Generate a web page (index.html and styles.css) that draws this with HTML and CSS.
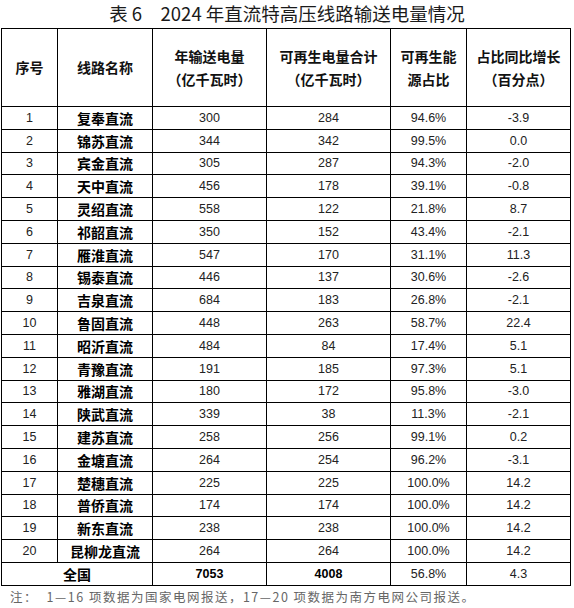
FILE: index.html
```html
<!DOCTYPE html>
<html>
<head>
<meta charset="utf-8">
<link rel="stylesheet" href="styles.css">
</head>
<body>
    <div class="title">表 6　2024 年直流特高压线路输送电量情况</div>
    <table class="grid">
        <colgroup>
            <col class="c-no"><col class="c-name"><col class="c-year"><col class="c-green"><col class="c-share"><col class="c-delta">
        </colgroup>
        <thead>
            <tr>
                <th>序号</th>
                <th>线路名称</th>
                <th>年输送电量<br>（亿千瓦时）</th>
                <th>可再生电量合计<br>（亿千瓦时）</th>
                <th>可再生能<br>源占比</th>
                <th>占比同比增长<br>（百分点）</th>
            </tr>
        </thead>
        <tbody>
            <tr><td>1</td><td class="name">复奉直流</td><td>300</td><td>284</td><td>94.6%</td><td>-3.9</td></tr>
            <tr><td>2</td><td class="name">锦苏直流</td><td>344</td><td>342</td><td>99.5%</td><td>0.0</td></tr>
            <tr><td>3</td><td class="name">宾金直流</td><td>305</td><td>287</td><td>94.3%</td><td>-2.0</td></tr>
            <tr><td>4</td><td class="name">天中直流</td><td>456</td><td>178</td><td>39.1%</td><td>-0.8</td></tr>
            <tr><td>5</td><td class="name">灵绍直流</td><td>558</td><td>122</td><td>21.8%</td><td>8.7</td></tr>
            <tr><td>6</td><td class="name">祁韶直流</td><td>350</td><td>152</td><td>43.4%</td><td>-2.1</td></tr>
            <tr><td>7</td><td class="name">雁淮直流</td><td>547</td><td>170</td><td>31.1%</td><td>11.3</td></tr>
            <tr><td>8</td><td class="name">锡泰直流</td><td>446</td><td>137</td><td>30.6%</td><td>-2.6</td></tr>
            <tr><td>9</td><td class="name">吉泉直流</td><td>684</td><td>183</td><td>26.8%</td><td>-2.1</td></tr>
            <tr><td>10</td><td class="name">鲁固直流</td><td>448</td><td>263</td><td>58.7%</td><td>22.4</td></tr>
            <tr><td>11</td><td class="name">昭沂直流</td><td>484</td><td>84</td><td>17.4%</td><td>5.1</td></tr>
            <tr><td>12</td><td class="name">青豫直流</td><td>191</td><td>185</td><td>97.3%</td><td>5.1</td></tr>
            <tr><td>13</td><td class="name">雅湖直流</td><td>180</td><td>172</td><td>95.8%</td><td>-3.0</td></tr>
            <tr><td>14</td><td class="name">陕武直流</td><td>339</td><td>38</td><td>11.3%</td><td>-2.1</td></tr>
            <tr><td>15</td><td class="name">建苏直流</td><td>258</td><td>256</td><td>99.1%</td><td>0.2</td></tr>
            <tr><td>16</td><td class="name">金塘直流</td><td>264</td><td>254</td><td>96.2%</td><td>-3.1</td></tr>
            <tr><td>17</td><td class="name">楚穗直流</td><td>225</td><td>225</td><td>100.0%</td><td>14.2</td></tr>
            <tr><td>18</td><td class="name">普侨直流</td><td>174</td><td>174</td><td>100.0%</td><td>14.2</td></tr>
            <tr><td>19</td><td class="name">新东直流</td><td>238</td><td>238</td><td>100.0%</td><td>14.2</td></tr>
            <tr><td>20</td><td class="name">昆柳龙直流</td><td>264</td><td>264</td><td>100.0%</td><td>14.2</td></tr>
            <tr class="total"><td colspan="2" class="name">全国</td><td class="strong">7053</td><td class="strong">4008</td><td>56.8%</td><td>4.3</td></tr>
        </tbody>
    </table>
    <div class="note">注：&nbsp; 1—16 项数据为国家电网报送，17—20 项数据为南方电网公司报送。</div>
</body>
</html>
```

FILE: styles.css
```css
html, body {
    margin: 0;
    padding: 0;
    background: #fff;
}
body {
    width: 574px;
    font-family: "Noto Sans CJK SC", sans-serif;
    color: #111;
}
.title {
    height: 28px;
    line-height: 26px;
    text-align: center;
    font-size: 18.5px;
    color: #1a1a1a;
}
.grid {
    border-collapse: collapse;
    margin-left: 1px;
    width: 569px;
    table-layout: fixed;
}
.c-no { width: 56px; }
.c-name { width: 95px; }
.c-year { width: 114px; }
.c-green { width: 124px; }
.c-share { width: 76px; }
.c-delta { width: 104px; }
.grid th, .grid td {
    border: 1px solid #000;
    padding: 0;
    text-align: center;
}
.grid th {
    height: 77px;
    font-size: 14px;
    line-height: 23px;
    font-weight: bold;
    color: #111;
}
.grid td {
    height: 21.8px;
    font-family: "Liberation Sans", sans-serif;
    font-size: 12.5px;
    color: #222;
}
.grid td.name {
    font-family: "Noto Sans CJK SC", sans-serif;
    font-size: 14px;
    font-weight: bold;
    color: #000;
    line-height: 16px;
}
.grid td.strong {
    font-weight: bold;
    color: #000;
}
.note {
    margin-top: 3px;
    padding-left: 10px;
    font-family: "Noto Sans CJK SC", sans-serif;
    font-size: 12.5px;
    letter-spacing: 1.5px;
    color: #666;
    line-height: 16px;
}
```
